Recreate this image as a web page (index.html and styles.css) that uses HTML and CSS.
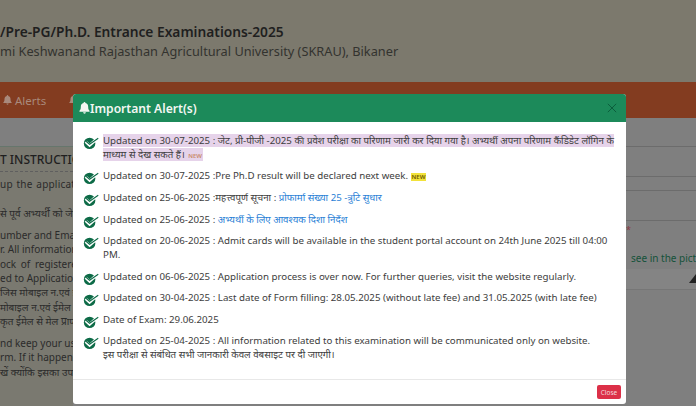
FILE: index.html
```html
<!DOCTYPE html>
<html lang="en">
<head>
<meta charset="utf-8">
<title>Important Alerts</title>
<link rel="stylesheet" href="styles.css">
</head>
<body>
<svg class="defs" width="0" height="0" aria-hidden="true">
  <symbol id="tick" viewBox="0 0 17 14">
    <circle cx="7" cy="7.4" r="6.1" fill="#0d6b47"/>
    <path d="M2.8 5.6 L7 9.4 L15.8 1.6" fill="none" stroke="#fff" stroke-width="3"/>
    <path d="M3.2 5.2 L7 8.4 L16.2 2" fill="none" stroke="#0d6b47" stroke-width="1.2"/>
  </symbol>
</svg>
<div class="page">
  <header class="top">
    <h1>/Pre-PG/Ph.D. Entrance Examinations-2025</h1>
    <p>mi Keshwanand Rajasthan Agricultural University (SKRAU), Bikaner</p>
  </header>
  <nav class="nav">
    <svg class="nav-bell" viewBox="0 0 12 13"><path d="M6 0a1 1 0 0 1 1 1.100C9 1.500 10 3.200 10 5c0 3 .8 3.700 1.500 4.600V10.500H.5V9.600C1.200 8.700 2 8 2 5c0-1.800 1-3.500 3-3.900A1 1 0 0 1 6 0zM4.500 11.200h3A1.500 1.500 0 0 1 4.500 11.200z" fill="#a98a7c"/></svg>
    <span>Alerts</span>
    <svg class="nav-bell nav-next" viewBox="0 0 12 13"><path d="M6 0a1 1 0 0 1 1 1.100C9 1.500 10 3.200 10 5c0 3 .8 3.700 1.500 4.600V10.500H.5V9.600C1.200 8.700 2 8 2 5c0-1.800 1-3.500 3-3.900A1 1 0 0 1 6 0z" fill="#a98a7c"/></svg>
  </nav>
  <main class="content">
    <section class="left">
      <h2>T INSTRUCTIONS</h2>
      <p class="first">up the application</p>
      <p class="blank">से पूर्व अभ्यर्थी को जेट</p>
      <p class="para">umber and Email</p>
      <p>r. All information</p>
      <p class="wide">ock of registered</p>
      <p>ed to Application</p>
      <p>जिस मोबाइल न.एवं ईमेल</p>
      <p>मोबाइल न.एवं ईमेल</p>
      <p>कृत ईमेल से मेल प्राप्त</p>
      <p class="para">nd keep your user</p>
      <p>rm. If it happens</p>
      <p>खें क्योंकि इसका उपयोग</p>
    </section>
    <section class="right">
      <div class="rule r1"></div>
      <div class="rule r2"></div>
      <div class="rule r3"></div>
      <div class="rule r4"></div>
      <p class="red">*</p>
      <p class="green">see in the picture</p>
      <div class="field"><span class="tri"></span></div>
    </section>
  </main>
</div>
<div class="modal">
  <div class="modal-head">
    <svg class="bell" viewBox="0 0 12 13"><path d="M6 0a1 1 0 0 1 1 1.100C9 1.500 10 3.200 10 5c0 3 .8 3.700 1.500 4.600V10.500H.5V9.600C1.200 8.700 2 8 2 5c0-1.800 1-3.500 3-3.900A1 1 0 0 1 6 0zM4.500 11.200h3A1.500 1.500 0 0 1 4.500 11.200z" fill="#f4f7f3"/></svg>
    <span class="modal-title">Important Alert(s)</span>
    <svg class="x" viewBox="0 0 12 12"><path d="M1 1L11 11M11 1L1 11" stroke="#0b5a3a" stroke-width="1.100" fill="none"/></svg>
  </div>
  <ul class="alerts">
    <li class="lead"><svg class="tick"><use href="#tick"/></svg><div><span class="mark">Updated on 30-07-2025 : जेट, प्री-पीजी -2025 की प्रवेश परीक्षा का परिणाम जारी कर दिया गया है। अभ्यर्थी अपना परिणाम कैंडिडेट लॉगिन के माध्यम से देख सकते हैं। <span class="new pink">NEW</span></span></div></li>
    <li><svg class="tick"><use href="#tick"/></svg><div>Updated on 30-07-2025 :Pre Ph.D result will be declared next week. <span class="new yellow">NEW</span></div></li>
    <li><svg class="tick"><use href="#tick"/></svg><div>Updated on 25-06-2025 :महत्त्वपूर्ण सूचना : <a href="#">प्रोफार्मा संख्या 25 -त्रुटि सुधार</a></div></li>
    <li><svg class="tick"><use href="#tick"/></svg><div>Updated on 25-06-2025 : <a href="#">अभ्यर्थी के लिए आवश्यक दिशा निर्देश</a></div></li>
    <li><svg class="tick"><use href="#tick"/></svg><div>Updated on 20-06-2025 : Admit cards will be available in the student portal account on 24th June 2025 till 04:00 PM.</div></li>
    <li><svg class="tick"><use href="#tick"/></svg><div>Updated on 06-06-2025 : Application process is over now. For further queries, visit the website regularly.</div></li>
    <li><svg class="tick"><use href="#tick"/></svg><div>Updated on 30-04-2025 : Last date of Form filling: 28.05.2025 (without late fee) and 31.05.2025 (with late fee)</div></li>
    <li><svg class="tick"><use href="#tick"/></svg><div>Date of Exam: 29.06.2025</div></li>
    <li><svg class="tick"><use href="#tick"/></svg><div>Updated on 25-04-2025 : All information related to this examination will be communicated only on website.<br>इस परीक्षा से संबंधित सभी जानकारी केवल वेबसाइट पर दी जाएगी।</div></li>
  </ul>
  <div class="modal-foot"><button class="close" type="button">Close</button></div>
</div>
</body>
</html>
```
FILE: styles.css
```css
* { box-sizing: border-box; }
html, body { margin: 0; height: 100%; }
body {
  position: relative;
  width: 696px;
  height: 406px;
  overflow: hidden;
  background: #7f7f7f;
  font-family: "Noto Sans", "Noto Sans Devanagari", "Noto Sans CJK SC", sans-serif;
  color: #3a3a3a;
}
.defs { position: absolute; }
.page { display: flex; flex-direction: column; height: 406px; }
.top {
  height: 82px;
  padding-top: 22px;
  background: #7c796d;
}
.top h1 {
  margin: 0;
  font-size: 13.750px;
  line-height: 20px;
  font-weight: 600;
  color: #1f1f1f;
}
.top p {
  margin: 0;
  font-size: 12.750px;
  line-height: 18px;
  color: #33332f;
}
.nav {
  height: 36px;
  background: #833c20;
  display: flex;
  align-items: center;
  gap: 3px;
  padding-left: 3px;
  font-size: 11.500px;
  color: #a98a7c;
}
.nav-bell { width: 9px; height: 10px; }
.nav-next { margin-left: 20px; }
.content { display: flex; flex: 1; justify-content: space-between; }
.left {
  width: 73px;
  padding-top: 28px;
  overflow: hidden;
  white-space: nowrap;
  background: linear-gradient(#7f7f7f 28px, #7a7970 28px);
}
.left h2 {
  margin: 0;
  height: 26px;
  padding-top: 3px;
  border-top: 1px solid #66766c;
  border-bottom: 1px dashed #5f5f5f;
  font-size: 12px;
  line-height: 20px;
  font-weight: 500;
  color: #1f1f1f;
}
.left p {
  margin: 0;
  font-size: 10px;
  line-height: 14.400px;
  color: #2b2b2b;
}
.left .first { margin-top: 5px; word-spacing: 1px; letter-spacing: .2px; }
.left .blank { margin-top: 14.400px; }
.left .para { margin-top: 7.500px; }
.left .wide { word-spacing: 2px; }
.right { width: 70px; overflow: hidden; white-space: nowrap; padding-top: 28px; }
.rule { height: 1px; background: #6c6c6c; }
.r2 { margin-top: 29px; }
.r3 { margin-top: 13px; }
.r4 { margin-top: 29px; }
.red {
  margin: 3px 0 0;
  height: 11px;
  font-size: 9px;
  line-height: 11px;
  color: #8a3a44;
}
.green {
  margin: 16px 0 0 5px;
  font-size: 10px;
  line-height: 14px;
  color: #14523a;
}
.field {
  position: relative;
  height: 21px;
  margin-top: 4px;
  background: #848484;
  border-bottom: 1px solid #767676;
}
.tri {
  position: absolute;
  right: 0;
  top: 5px;
  border-left: 7px solid transparent;
  border-bottom: 9px solid #222;
}
.modal {
  position: absolute;
  left: 73px;
  top: 94px;
  width: 553px;
  height: 310px;
  background: #fff;
  border-radius: 3px;
  display: flex;
  flex-direction: column;
  overflow: hidden;
}
.modal-head {
  flex: none;
  height: 28px;
  background: #1c8a5a;
  display: flex;
  align-items: center;
  padding: 0 4px 0 6px;
  color: #f4f7f3;
}
.bell { width: 11px; height: 12px; }
.modal-title { font-size: 12.100px; font-weight: 600; flex: 1; }
.x { width: 10px; height: 10px; margin-right: 5px; }
.alerts {
  flex: 1;
  list-style: none;
  margin: 0;
  padding: 12px 7px 0 10px;
  display: flex;
  flex-direction: column;
  gap: 7px;
  font-size: 9.720px;
  line-height: 14.400px;
  color: #3d3d3d;
}
.alerts li { display: flex; }
.alerts .lead { margin-bottom: -2px; }
.tick { flex: none; width: 16px; height: 14px; margin: 2px 4px -2px 0; }
.alerts a { color: #2a7fd6; text-decoration: none; }
.mark { background: #e6d3ea; }
.new { font-size: 6px; font-weight: 600; padding: 0 1px; }
.pink { color: #c98a6a; }
.yellow { color: #6d5a00; background: #f2e23a; }
.modal-foot {
  flex: none;
  height: 25px;
  border-top: 1px solid #e8e8e8;
  display: flex;
  justify-content: flex-end;
  align-items: center;
  padding-right: 5px;
}
.close {
  width: 24px;
  height: 14px;
  padding: 0;
  border: 0;
  border-radius: 2px;
  background: #dc3048;
  color: #f3d9dc;
  font: 6.500px "Noto Sans", sans-serif;
}
```
